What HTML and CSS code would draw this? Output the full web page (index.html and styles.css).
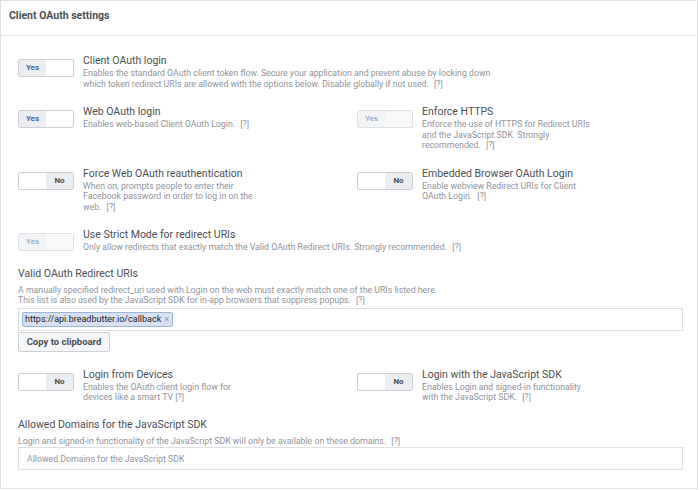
FILE: index.html
```html
<!DOCTYPE html>
<html lang="en">
<head>
<meta charset="utf-8">
<title>Client OAuth settings</title>
<link rel="stylesheet" href="styles.css">
</head>
<body>
<div class="card">
  <div class="card-header">Client OAuth settings</div>
  <div class="card-body">
    <div class="setting row-first">
      <div class="toggle on"><span class="half yes">Yes</span><span class="half no"></span></div>
      <div class="text">
        <div class="title">Client OAuth login</div>
        <div class="desc">Enables the standard OAuth client token flow. Secure your application and prevent abuse by locking down<br>which token redirect URIs are allowed with the options below. Disable globally if not used. <span class="help">[?]</span></div>
      </div>
    </div>

    <div class="pair row">
      <div class="setting">
        <div class="toggle on"><span class="half yes">Yes</span><span class="half no"></span></div>
        <div class="text">
          <div class="title">Web OAuth login</div>
          <div class="desc">Enables web-based Client OAuth Login. <span class="help">[?]</span></div>
        </div>
      </div>
      <div class="setting">
        <div class="toggle on disabled"><span class="half yes">Yes</span><span class="half no"></span></div>
        <div class="text">
          <div class="title">Enforce HTTPS</div>
          <div class="desc">Enforce the use of HTTPS for Redirect URIs<br>and the JavaScript SDK. Strongly<br>recommended. <span class="help">[?]</span></div>
        </div>
      </div>
    </div>

    <div class="pair row">
      <div class="setting">
        <div class="toggle off"><span class="half yes"></span><span class="half no">No</span></div>
        <div class="text">
          <div class="title">Force Web OAuth reauthentication</div>
          <div class="desc">When on, prompts people to enter their<br>Facebook password in order to log in on the<br>web. <span class="help">[?]</span></div>
        </div>
      </div>
      <div class="setting">
        <div class="toggle off"><span class="half yes"></span><span class="half no">No</span></div>
        <div class="text">
          <div class="title">Embedded Browser OAuth Login</div>
          <div class="desc">Enable webview Redirect URIs for Client<br>OAuth Login. <span class="help">[?]</span></div>
        </div>
      </div>
    </div>

    <div class="setting row">
      <div class="toggle on disabled"><span class="half yes">Yes</span><span class="half no"></span></div>
      <div class="text">
        <div class="title">Use Strict Mode for redirect URIs</div>
        <div class="desc">Only allow redirects that exactly match the Valid OAuth Redirect URIs. Strongly recommended. <span class="help">[?]</span></div>
      </div>
    </div>

    <div class="field field-uris">
      <div class="title">Valid OAuth Redirect URIs</div>
      <div class="desc field-desc">A manually specified redirect_uri used with Login on the web must exactly match one of the URIs listed here.<br>This list is also used by the JavaScript SDK for in-app browsers that suppress popups. <span class="help">[?]</span></div>
      <div class="tokenbox">
        <span class="chip">https://api.breadbutter.io/callback<span class="chip-x">×</span></span>
      </div>
      <button class="btn" type="button">Copy to clipboard</button>
    </div>

    <div class="pair row-devices">
      <div class="setting">
        <div class="toggle off"><span class="half yes"></span><span class="half no">No</span></div>
        <div class="text">
          <div class="title">Login from Devices</div>
          <div class="desc">Enables the OAuth client login flow for<br>devices like a smart TV <span class="help tight">[?]</span></div>
        </div>
      </div>
      <div class="setting">
        <div class="toggle off"><span class="half yes"></span><span class="half no">No</span></div>
        <div class="text">
          <div class="title">Login with the JavaScript SDK</div>
          <div class="desc">Enables Login and signed-in functionality<br>with the JavaScript SDK. <span class="help">[?]</span></div>
        </div>
      </div>
    </div>

    <div class="field field-domains">
      <div class="title">Allowed Domains for the JavaScript SDK</div>
      <div class="desc field-desc">Login and signed-in functionality of the JavaScript SDK will only be available on these domains. <span class="help">[?]</span></div>
      <input class="textinput" type="text" placeholder="Allowed Domains for the JavaScript SDK">
    </div>
  </div>
</div>
</body>
</html>
```

FILE: styles.css
```css
* {
  box-sizing: border-box;
}

body {
  margin: 0;
  background: #ffffff;
  font-family: Roboto, "Liberation Sans", Arial, sans-serif;
  color: #4b4f56;
}

.card {
  width: 698px;
  height: 489px;
  border: 1px solid #dddfe2;
  background: #ffffff;
}

.card-header {
  height: 35px;
  padding: 8px 8px 0;
  border-bottom: 1px solid #e5e6e9;
  font-size: 10.5px;
  line-height: 14px;
  font-weight: 700;
  color: #4b4f56;
}

.card-body {
  padding: 17px 14px 0 17px;
}

.row-first {
  margin-top: 0;
}

.row {
  margin-top: 15px;
}

.pair {
  display: grid;
  grid-template-columns: 339px 1fr;
}

.setting {
  display: flex;
  align-items: flex-start;
  gap: 9px;
}

.toggle {
  flex: 0 0 56px;
  width: 56px;
  height: 18px;
  margin-top: 6px;
  display: flex;
  border: 1px solid #ccd0d5;
  border-radius: 2px;
  overflow: hidden;
  background: #ffffff;
}

.half {
  flex: 1 1 0;
  display: flex;
  align-items: center;
  justify-content: center;
  font-size: 8px;
  font-weight: 700;
  line-height: 1;
}

.toggle.on .yes {
  background: #ebedf0;
  color: #4267b2;
}

.toggle.off .no {
  background: #ebedf0;
  color: #4b4f56;
}

.toggle.disabled {
  border-color: #dddfe2;
}

.toggle.disabled .yes {
  background: #f2f3f5;
  color: #9cb4d8;
}

.toggle.disabled .no {
  background: #f7f8fa;
}

.title {
  font-size: 10.5px;
  line-height: 15px;
  color: #4b4f56;
  white-space: nowrap;
}

.desc {
  font-size: 8.75px;
  line-height: 10.5px;
  color: #90949c;
  white-space: nowrap;
}

.help {
  margin-left: 3px;
}

.help.tight {
  margin-left: 0;
}

.field-uris {
  margin-top: 13px;
}

.field-desc {
  margin-top: 4px;
}

.tokenbox {
  margin-top: 2px;
  height: 23px;
  border: 1px solid #dddfe2;
  padding: 3px;
  display: flex;
  align-items: center;
}

.chip {
  display: inline-flex;
  align-items: center;
  height: 15px;
  padding: 0 3px 0 2px;
  background: #d8e1f2;
  border: 1px solid #9cb4d8;
  border-radius: 2px;
  font-size: 9px;
  color: #1d2129;
  white-space: nowrap;
}

.chip-x {
  margin-left: 3px;
  color: #90949c;
  font-size: 9px;
}

.btn {
  display: block;
  margin-top: 1px;
  height: 20px;
  width: 92px;
  padding: 0;
  background: #f5f6f7;
  border: 1px solid #ccd0d5;
  border-radius: 2px;
  font-family: Roboto, "Liberation Sans", Arial, sans-serif;
  font-size: 9.5px;
  font-weight: 700;
  color: #4b4f56;
}

.row-devices {
  margin-top: 15px;
}

.field-domains {
  margin-top: 14px;
}

.field-domains .field-desc {
  margin-top: 4px;
}

.textinput {
  display: block;
  width: 100%;
  height: 23px;
  margin-top: 1px;
  padding: 0 8px;
  border: 1px solid #dddfe2;
  border-radius: 0;
  outline: none;
  font-family: Roboto, "Liberation Sans", Arial, sans-serif;
  font-size: 8.75px;
  color: #1d2129;
}

.textinput::placeholder {
  color: #90949c;
}
```
